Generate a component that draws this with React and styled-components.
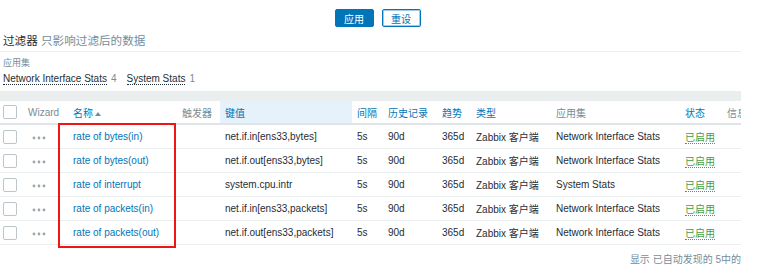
import React from "react";
import styled, { createGlobalStyle } from "styled-components";

const GlobalStyle = createGlobalStyle`
  html, body {
    margin: 0;
    padding: 0;
    background: #ffffff;
  }
  body {
    font-family: "Liberation Sans", Arial, "Noto Sans CJK SC", sans-serif;
    font-size: 10px;
    color: #1f2c33;
  }
`;

const Page = styled.div`
  width: 741px;
  height: 276px;
  overflow: hidden;
  position: relative;
`;

const ButtonRow = styled.div`
  display: flex;
  justify-content: center;
  gap: 8px;
  padding: 9px 0 0 14px;
  height: 18px;
`;

const Button = styled.button`
  box-sizing: border-box;
  width: 39px;
  height: 18px;
  padding: 0;
  font-family: inherit;
  font-size: 10px;
  border-radius: 2px;
  border: 1px solid #0275b8;
  background: ${(p) => (p.$primary ? "#0275b8" : "#ffffff")};
  color: ${(p) => (p.$primary ? "#ffffff" : "#0275b8")};
  box-shadow: ${(p) => (p.$primary ? "none" : "inset 0 0 0 1px #9fcbe6")};
`;

const FilterHead = styled.div`
  padding: 5px 3px 0;
  height: 19px;
  font-size: 11.6px;
  line-height: 18px;
  border-bottom: 1px solid #ebeeef;
`;

const Muted = styled.span`
  color: #768d99;
`;

const AppLabel = styled.div`
  padding: 6px 3px 0;
  color: #768d99;
  font-size: 9px;
  line-height: 11px;
`;

const TagRow = styled.div`
  display: flex;
  gap: 10px;
  padding: 3px 3px 0;
  height: 16px;
  line-height: 14px;
`;

const Tag = styled.span`
  white-space: nowrap;
`;

const Dotted = styled.span`
  border-bottom: 1px dotted #1f2c33;
  color: ${(p) => p.$color || "#1f2c33"};
  border-bottom-color: ${(p) => p.$color || "#1f2c33"};
`;

const Count = styled.span`
  color: #768d99;
  margin-left: 4px;
`;

const Band = styled.div`
  margin-top: 3px;
  height: 10px;
  background: #ebeeef;
`;

const TableWrap = styled.div`
  position: relative;
`;

const Table = styled.table`
  border-collapse: collapse;
  table-layout: fixed;
  width: 800px;
  white-space: nowrap;
`;

const Th = styled.th`
  height: 22px;
  padding: 0 5px;
  text-align: left;
  font-weight: normal;
  color: ${(p) => (p.$sort ? "#0275b8" : "#768d99")};
  background: ${(p) => (p.$hl ? "#e5f2fc" : "transparent")};
  border-bottom: 2px solid #dfe4e7;
  overflow: hidden;
`;

const Td = styled.td`
  height: 23px;
  padding: 0 5px;
  border-bottom: 1px solid #ebeeef;
  color: ${(p) => p.$color || "#1f2c33"};
  overflow: hidden;
`;

const Check = styled.span`
  display: block;
  box-sizing: border-box;
  width: 14px;
  height: 14px;
  border: 1px solid #bcc5ca;
  border-radius: 2px;
  background: #fff;
  margin-left: -2px;
`;

const SortArrow = styled.span`
  display: inline-block;
  margin-left: 2px;
  width: 0;
  height: 0;
  border-left: 3px solid transparent;
  border-right: 3px solid transparent;
  border-bottom: 4px solid #768d99;
  vertical-align: 1px;
`;

const Highlight = styled.div`
  position: absolute;
  left: 58px;
  top: 22px;
  width: 118px;
  height: 125px;
  box-sizing: border-box;
  border: 2px solid #f01414;
  pointer-events: none;
`;

const Footer = styled.div`
  text-align: right;
  color: #768d99;
  padding-top: 6px;
  white-space: nowrap;
`;

function Dots() {
  return (
    <svg width="14" height="4" viewBox="0 0 14 4">
      {[2, 7, 12].map((cx) => (
        <circle key={cx} cx={cx} cy="2" r="1.4" fill="#9aa7ae" />
      ))}
    </svg>
  );
}

const rows = [
  ["rate of bytes(in)", "net.if.in[ens33,bytes]", "Network Interface Stats"],
  ["rate of bytes(out)", "net.if.out[ens33,bytes]", "Network Interface Stats"],
  ["rate of interrupt", "system.cpu.intr", "System Stats"],
  ["rate of packets(in)", "net.if.in[ens33,packets]", "Network Interface Stats"],
  ["rate of packets(out)", "net.if.out[ens33,packets]", "Network Interface Stats"],
];

const widths = [23, 45, 109, 43, 132, 31, 54, 34, 80, 129, 42, 78];

export default function App() {
  return (
    <Page>
      <GlobalStyle />
      <ButtonRow>
        <Button $primary>应用</Button>
        <Button>重设</Button>
      </ButtonRow>
      <FilterHead>
        过滤器 <Muted>只影响过滤后的数据</Muted>
      </FilterHead>
      <AppLabel>应用集</AppLabel>
      <TagRow>
        <Tag>
          <Dotted>Network Interface Stats</Dotted>
          <Count>4</Count>
        </Tag>
        <Tag>
          <Dotted>System Stats</Dotted>
          <Count>1</Count>
        </Tag>
      </TagRow>
      <Band />
      <TableWrap>
        <Table>
          <colgroup>
            {widths.map((w, i) => (
              <col key={i} style={{ width: w }} />
            ))}
          </colgroup>
          <thead>
            <tr>
              <Th style={{ paddingLeft: 5 }}>
                <Check />
              </Th>
              <Th>Wizard</Th>
              <Th $sort>
                名称
                <SortArrow />
              </Th>
              <Th>触发器</Th>
              <Th $sort $hl>键值</Th>
              <Th $sort>间隔</Th>
              <Th $sort>历史记录</Th>
              <Th $sort>趋势</Th>
              <Th $sort>类型</Th>
              <Th>应用集</Th>
              <Th $sort>状态</Th>
              <Th>信息</Th>
            </tr>
          </thead>
          <tbody>
            {rows.map(([name, key, app]) => (
              <tr key={name}>
                <Td style={{ paddingLeft: 5 }}>
                  <Check />
                </Td>
                <Td style={{ paddingLeft: 9 }}>
                  <Dots />
                </Td>
                <Td $color="#0275b8">{name}</Td>
                <Td />
                <Td>{key}</Td>
                <Td>5s</Td>
                <Td>90d</Td>
                <Td>365d</Td>
                <Td>Zabbix 客户端</Td>
                <Td>{app}</Td>
                <Td>
                  <Dotted $color="#429e47">已启用</Dotted>
                </Td>
                <Td />
              </tr>
            ))}
          </tbody>
        </Table>
        <Highlight />
      </TableWrap>
      <Footer>显示 已自动发现的 5中的</Footer>
    </Page>
  );
}
